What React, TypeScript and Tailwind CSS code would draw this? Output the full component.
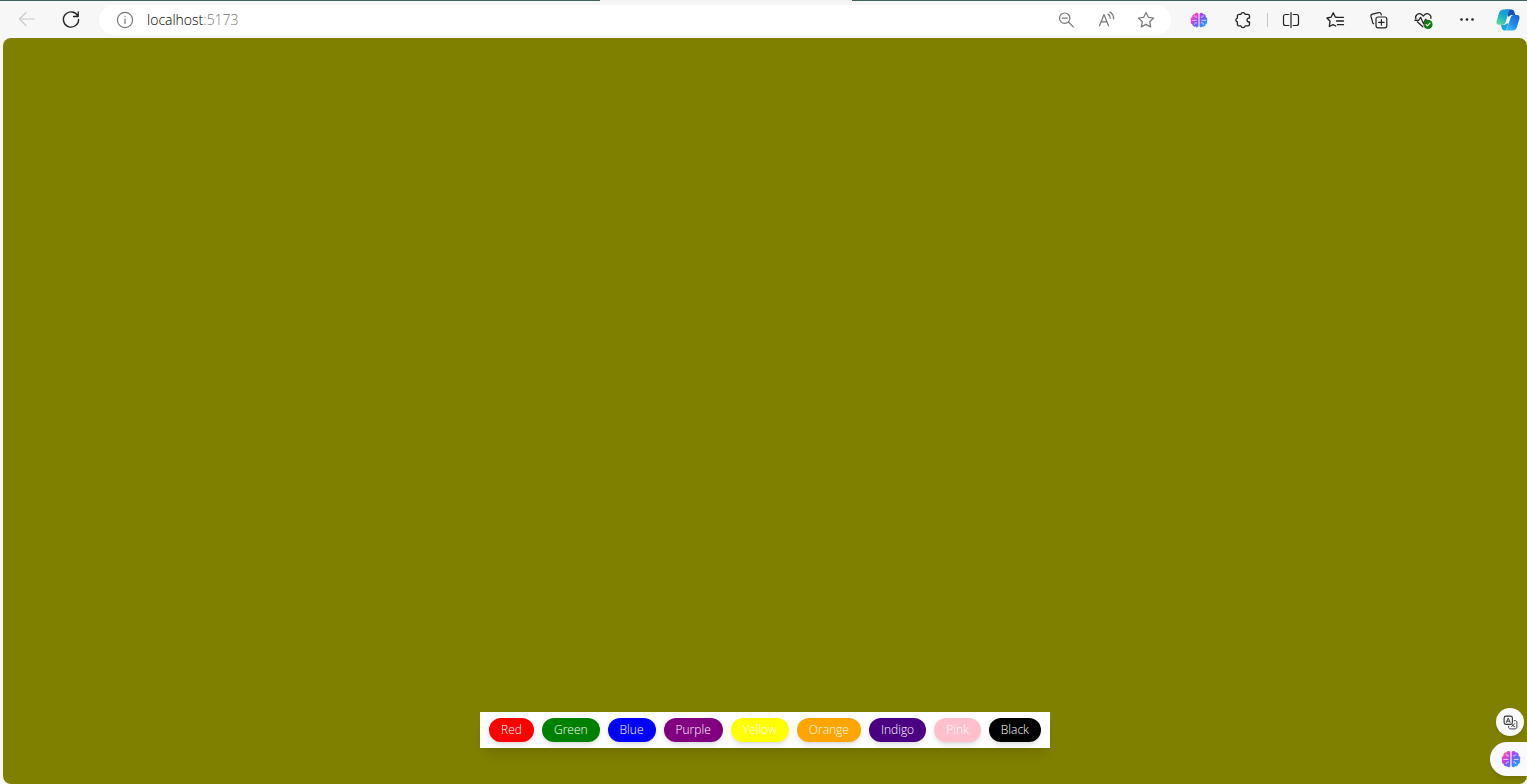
import { useState, type ReactNode } from "react";

const COLORS = [
  { label: "Red", value: "red" },
  { label: "Green", value: "green" },
  { label: "Blue", value: "blue" },
  { label: "Purple", value: "purple" },
  { label: "Yellow", value: "yellow" },
  { label: "Orange", value: "orange" },
  { label: "Indigo", value: "indigo" },
  { label: "Pink", value: "pink" },
  { label: "Black", value: "black" },
];

function Icon({ children, className = "size-5" }: { children: ReactNode; className?: string }) {
  return (
    <svg
      viewBox="0 0 20 20"
      className={className}
      fill="none"
      stroke="currentColor"
      strokeWidth="1.2"
      strokeLinecap="round"
      strokeLinejoin="round"
      aria-hidden="true"
    >
      {children}
    </svg>
  );
}

function ToolButton({ label, children }: { label: string; children: ReactNode }) {
  return (
    <button type="button" aria-label={label} className="flex h-8 w-11 shrink-0 items-center justify-center text-[#222]">
      {children}
    </button>
  );
}

function FieldButton({ label, children }: { label: string; children: ReactNode }) {
  return (
    <button type="button" aria-label={label} className="flex h-7 w-10 shrink-0 items-center justify-center text-[#777]">
      {children}
    </button>
  );
}

function Brain({ id, className }: { id: string; className: string }) {
  return (
    <svg viewBox="0 0 20 20" className={className} aria-hidden="true">
      <defs>
        <linearGradient id={id} x1="0" y1="0" x2="0.9" y2="0.8">
          <stop offset="0" stopColor="#ff9a3c" />
          <stop offset="0.28" stopColor="#f040c8" />
          <stop offset="0.58" stopColor="#8a4dff" />
          <stop offset="1" stopColor="#1fa2ff" />
        </linearGradient>
      </defs>
      <path
        fill={`url(#${id})`}
        d="M9.4 3C8.6 1.4 6.2 1.6 5.5 3.3 3.4 3.3 1.9 4.8 2.5 6.7.6 7.5.2 9.5 1.2 10.9c-.9 1.7-.2 3.4 1.5 4.1.2 1.7 1.8 2.7 3.3 2.3.8 1.2 2.6 1.2 3.4 0zM10.6 3c.8-1.6 3.2-1.4 3.9.3 2.1 0 3.6 1.5 3 3.4 1.9.8 2.3 2.8 1.3 4.2.9 1.7.2 3.4-1.5 4.1-.2 1.7-1.8 2.7-3.3 2.3-.8 1.2-2.6 1.2-3.4 0z"
      />
      <path
        fill="none"
        stroke="#fff"
        strokeOpacity="0.85"
        strokeWidth="0.9"
        strokeLinecap="round"
        d="M5.2 5.3c.1 1.3 1.1 1.8 2.3 1.6M2.8 10.4h4.2M5.1 14.7c0-1.3 1-1.9 2.3-1.6M14.8 5.3c-.1 1.3-1.1 1.8-2.3 1.6M17.2 10.4H13M14.9 14.7c0-1.3-1-1.9-2.3-1.6"
      />
    </svg>
  );
}

function Copilot() {
  return (
    <svg viewBox="0 0 24 24" className="size-6" aria-hidden="true">
      <defs>
        <linearGradient id="cp-left" x1="0.8" y1="0" x2="0.25" y2="1">
          <stop offset="0" stopColor="#1f8fe0" />
          <stop offset="0.5" stopColor="#18b0c8" />
          <stop offset="1" stopColor="#5fd89a" />
        </linearGradient>
        <linearGradient id="cp-right" x1="0.9" y1="0" x2="0.2" y2="1">
          <stop offset="0" stopColor="#1763d0" />
          <stop offset="0.5" stopColor="#2186e8" />
          <stop offset="1" stopColor="#35c0fa" />
        </linearGradient>
      </defs>
      <path fill="#1550b4" d="M9 1.5h6.6c1.7 0 2.4 1 2.8 2.4l.9 3.1h-3c-1.8 0-2.8.5-3.4 2.2L11 6z" />
      <path
        fill="url(#cp-left)"
        d="M7.4 1.5h7.2c-1.2.6-1.6 1.6-2 3.1L9.9 13.5c-.6 2-1.8 3.3-3.8 3.3H3c-2.2 0-3-1.7-2.4-3.8l2.5-8.2c.6-2 2.2-3.3 4.3-3.3z"
      />
      <path fill="#18a5e0" d="M4.8 16.8h3c1.5 0 2.5-.5 3.1-2l1.7.2-1.4 4.2c-.5 1.6-1.1 2.8-2.2 3.2H8.6c-1.7 0-2.4-1-2.8-2.4z" />
      <path
        fill="url(#cp-right)"
        d="M16.6 22.5H9c1.3-.5 1.9-1.7 2.4-3.2l3-9c.6-2 1.5-3.3 3.5-3.3H21c2.2 0 3 1.7 2.4 3.8l-2.5 8.4c-.6 2-2.2 3.3-4.3 3.3z"
      />
      <path fill="#f7f7f8" d="M12.7 8.6h2.1l-2.3 6.8h-2.1z" />
    </svg>
  );
}

function BrowserBar() {
  return (
    <header className="flex shrink-0 flex-col bg-[#f7f7f8]">
      <div className="grid h-px grid-cols-[600fr_252fr_675fr] bg-[#3f625f]">
        <div className="col-start-2 bg-[#f2f2f2]" />
      </div>
      <div className="flex h-[37px] items-center pl-[5px]">
        <button type="button" aria-label="Back" className="flex h-8 w-11 items-center justify-center text-[#cacaca]">
          <Icon>
            <path d="M17.5 9h-15M9 2.5 2.5 9 9 15.5" />
          </Icon>
        </button>
        <ToolButton label="Refresh">
          <Icon>
            <path strokeWidth="1.4" d="M16.9 6.3A7.6 7.6 0 1 0 17.6 9.5M17.2 1.9v4.6h-4.6" />
          </Icon>
        </ToolButton>
        <div className="ml-1.5 flex h-[30px] min-w-0 flex-1 items-center rounded-full bg-white pr-[5px] pl-4">
          <button type="button" aria-label="Site information" className="mr-3 text-[#777]">
            <Icon>
              <circle cx="10" cy="10" r="7.6" />
              <path d="M10 9v4.6M10 6.4v.2" />
            </Icon>
          </button>
          <p className="min-w-0 flex-1 font-['Open_Sans',sans-serif] text-sm font-light text-[#777]">
            <span className="text-black">localhost</span>:5173
          </p>
          <FieldButton label="Zoom out">
            <Icon>
              <circle cx="8.7" cy="8.2" r="5.2" />
              <path d="m12.5 12 4.8 4.8M6.3 8.2h4.8" />
            </Icon>
          </FieldButton>
          <FieldButton label="Read aloud">
            <Icon>
              <path d="M3.5 15.8 8 4.5l4.5 11.3M5.1 11.9h5.8M12 4.1c1.5.8 2.2 2.2 2.2 4.2M13.8 2c2.6 1.4 3.9 3.7 3.7 6.8" />
            </Icon>
          </FieldButton>
          <FieldButton label="Add to favorites">
            <Icon>
              <path d="m10 2.5 2.3 4.8 5.3.7-3.9 3.7 1 5.2-4.7-2.5-4.7 2.5 1-5.2L2.4 8l5.3-.7z" />
            </Icon>
          </FieldButton>
        </div>
        <div className="ml-1.5 flex items-center">
          <ToolButton label="AI assistant">
            <Brain id="brain-bar" className="size-[18px]" />
          </ToolButton>
          <ToolButton label="Extensions">
            <Icon>
              <path
                strokeWidth="1.3"
                d="M6 4.4h1.9a2.2 2.2 0 0 1 4.3 0h2.6c1 0 1.7.7 1.7 1.7v2h-1a2 2 0 0 0 0 3.9h1v2.2c0 1-.7 1.7-1.7 1.7h-2.6a2.2 2.2 0 0 1-4.3 0H6c-1 0-1.6-.7-1.6-1.7V12a2 2 0 0 1 0-3.9v-2c0-1 .6-1.7 1.6-1.7z"
              />
            </Icon>
          </ToolButton>
          <div className="flex w-1 justify-center">
            <div className="h-3.5 w-px bg-[#c4c4c4]" />
          </div>
          <ToolButton label="Split screen">
            <Icon>
              <path d="M7.8 4.5H4.5c-1.1 0-2 .9-2 2v7c0 1.1.9 2 2 2h3.3M12.2 4.5h3.3c1.1 0 2 .9 2 2v7c0 1.1-.9 2-2 2h-3.3M10 2.5v15" />
            </Icon>
          </ToolButton>
          <ToolButton label="Favorites">
            <Icon>
              <path
                strokeWidth="1.3"
                d="M12 7.3 10.3 7 8.2 2.8 6.1 7.2 2 8l3 3.3-.7 5.2 3.8-1.9 2.7 1.4M12.5 7.3h6M11.5 11h7M12.5 14.7h6"
              />
            </Icon>
          </ToolButton>
          <ToolButton label="Collections">
            <Icon>
              <rect x="7" y="7" width="10.8" height="10.8" rx="2" />
              <path d="M12.4 9.7v5.4M9.7 12.4h5.4M4.7 13.8l-.8-.5L2 6.5c-.3-1.2.3-2 1.4-2.3l6.4-1.6c1.2-.3 2 .3 2.3 1.4l.2.8" />
            </Icon>
          </ToolButton>
          <ToolButton label="Browser essentials">
            <Icon>
              <path d="M2.9 9c-1.5-3.8 3-7 6.2-4.2l1.2 1.2 1.2-1.2c2.9-2.7 7.1-.2 6.4 3.5M4.3 11.8l5.5 5M1.8 10.3h3.8l2-3 2.8 6.2 2.2-4.3 1 1.1" />
              <circle cx="15" cy="14.4" r="4.6" fill="#107c10" stroke="none" />
              <path stroke="#fff" d="m13.1 14.6 1.3 1.3 2.6-2.8" />
            </Icon>
          </ToolButton>
          <ToolButton label="Settings and more">
            <Icon>
              <g fill="currentColor" stroke="none">
                <circle cx="4.5" cy="9.5" r="1.3" />
                <circle cx="10" cy="9.5" r="1.3" />
                <circle cx="15.5" cy="9.5" r="1.3" />
              </g>
            </Icon>
          </ToolButton>
          <button type="button" aria-label="Copilot" className="flex w-[38px] items-center justify-center">
            <Copilot />
          </button>
        </div>
      </div>
    </header>
  );
}

export default function App() {
  const [color, setColor] = useState("olive");

  return (
    <div className="flex h-screen flex-col bg-[#f7f7f8]">
      <BrowserBar />
      <main
        className="relative ml-[3px] flex flex-1 items-end justify-center rounded-lg pb-9"
        style={{ backgroundColor: color }}
      >
        <div className="flex flex-wrap justify-center gap-2 bg-white px-[9px] py-1.5 shadow-lg">
          {COLORS.map(({ label, value }) => (
            <button
              key={value}
              type="button"
              onClick={() => setColor(value)}
              className="h-6 rounded-full px-3 font-['Open_Sans',sans-serif] text-xs font-light text-white shadow-md"
              style={{ backgroundColor: value }}
            >
              {label}
            </button>
          ))}
        </div>
        <div className="absolute right-0 bottom-2 flex flex-col items-end gap-1.5">
          <button
            type="button"
            aria-label="Translate"
            className="mr-[3px] flex size-7 items-center justify-center rounded-full bg-[#fafafa] text-[#333] shadow-md"
          >
            <Icon className="size-[15px]">
              <rect x="1.5" y="1.5" width="11" height="11" rx="2.5" strokeWidth="1.5" />
              <path d="M4.5 10 7 4l2.5 6M5.3 8.3h3.4M15 7.5h1.2c1.3 0 2.3 1 2.3 2.3v6.4c0 1.3-1 2.3-2.3 2.3H9.8c-1.3 0-2.3-1-2.3-2.3V15M11.5 15.5l4-4M12 12.5c.5 1.5 2 2.8 3.8 3.2" />
            </Icon>
          </button>
          <button
            type="button"
            aria-label="Open AI assistant"
            className="flex h-[34px] w-[37px] items-center justify-center rounded-l-full bg-[#fafafa] pl-1 shadow-md"
          >
            <Brain id="brain-float" className="size-5" />
          </button>
        </div>
      </main>
    </div>
  );
}
